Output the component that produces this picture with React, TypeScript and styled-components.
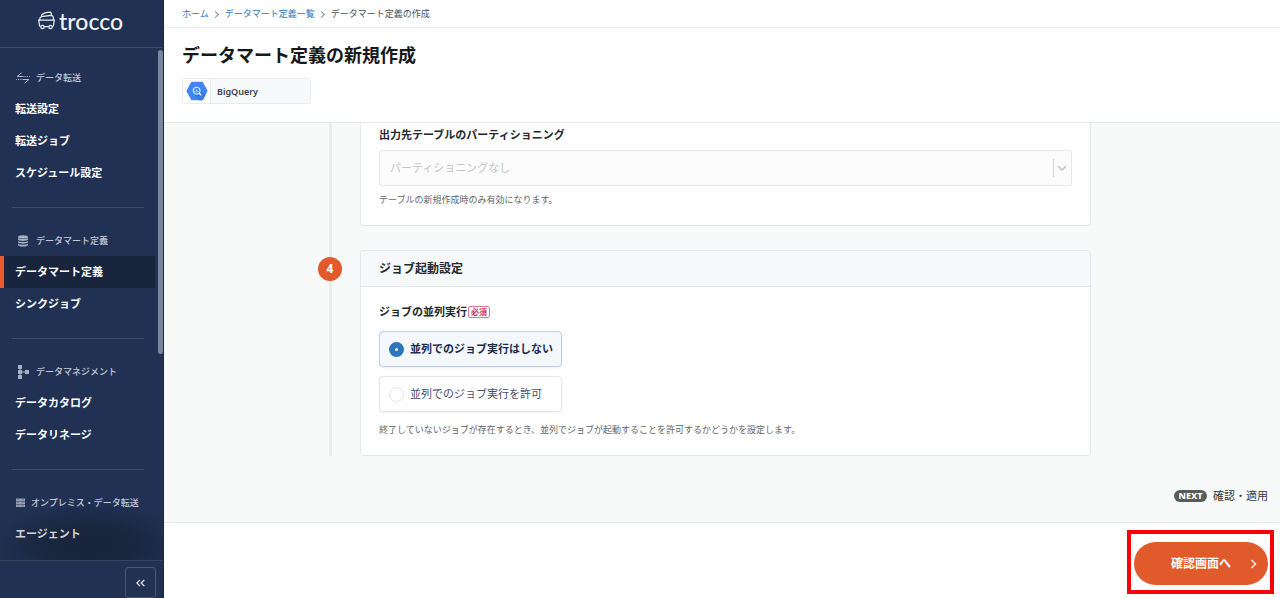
import React, { useState } from "react";
import styled, { createGlobalStyle } from "styled-components";

const GlobalStyle = createGlobalStyle`
  *, *::before, *::after { box-sizing: border-box; }
  body {
    margin: 0;
    font-family: "Noto Sans", "Noto Sans CJK JP", sans-serif;
    font-size: 11px;
    line-height: 16px;
    color: #24292e;
    background: #ffffff;
  }
  h1, h2, p, ul, ol, fieldset { margin: 0; padding: 0; border: 0; list-style: none; }
  a { text-decoration: none; }
  button, select, input { font: inherit; margin: 0; }
`;

const Shell = styled.div`
  display: flex;
  height: 100vh;
`;

/* ---------- sidebar ---------- */

const Sidebar = styled.aside`
  display: flex;
  flex-direction: column;
  flex: 0 0 164px;
  color: #ffffff;
  background: #203154;
  border-right: 1px solid #182644;
`;

const Logo = styled.a`
  display: flex;
  align-items: center;
  gap: 3px;
  flex: 0 0 48px;
  padding: 0 0 6px 37px;
  border-bottom: 1px solid #3a4a6a;
  color: #f2f4f7;
  font-family: Lato, sans-serif;
  font-size: 23px;
  font-weight: 500;
  line-height: 28px;
`;

const Nav = styled.nav`
  position: relative;
  flex: 1 1 0;
  min-height: 0;
  padding-top: 13px;
  overflow: hidden;

  &::after {
    content: "";
    position: absolute;
    inset: auto 0 0 0;
    height: 56px;
    background: radial-gradient(ellipse 100px 44px at 55% 75%, rgba(20, 28, 42, 0.6), rgba(20, 28, 42, 0.5) 45%, rgba(20, 28, 42, 0));
    pointer-events: none;
  }
`;

const ScrollThumb = styled.span`
  position: absolute;
  top: 2px;
  right: 0;
  width: 5px;
  height: 304px;
  border-radius: 3px;
  background: #7a869d;
`;

const NavSection = styled.section`
  & + &::before {
    content: "";
    display: block;
    height: 1px;
    margin: 18px 19px 16px 12px;
    background: #3c4b6a;
  }

  &:last-of-type a {
    position: relative;
    z-index: 1;
    color: #d3d4d7;
  }
`;

const NavHeading = styled.h2`
  display: flex;
  align-items: center;
  gap: 6px;
  height: 32px;
  padding: 1px 0 0 16px;
  color: #c3c9d4;
  font-size: 9px;
  font-weight: 500;
`;

const NavLink = styled.a<{ $active?: boolean }>`
  display: flex;
  align-items: center;
  height: 32px;
  margin-right: 8px;
  padding: 0 0 0 11px;
  border-left: 4px solid ${(p) => (p.$active ? "#e85d2c" : "transparent")};
  background: ${(p) => (p.$active ? "#18253d" : "transparent")};
  color: #ffffff;
  font-weight: 700;
`;

const SidebarFoot = styled.div`
  display: flex;
  justify-content: flex-end;
  flex: 0 0 38px;
  padding: 6px 7px 0 0;
  border-top: 1px solid #34435f;
`;

const CollapseButton = styled.button`
  display: grid;
  place-items: center;
  width: 31px;
  height: 31px;
  padding: 0;
  border: 1px solid #4a5875;
  border-radius: 3px;
  background: transparent;
  color: #e3e7ee;
`;

/* ---------- page header ---------- */

const Page = styled.div`
  display: flex;
  flex-direction: column;
  flex: 1 1 0;
  min-width: 0;
`;

const Breadcrumbs = styled.nav`
  flex: 0 0 28px;
  padding: 0 18px;
  border-bottom: 1px solid #e9ebec;
  font-size: 9px;

  ol {
    display: flex;
    align-items: center;
    height: 27px;
  }
  li {
    display: flex;
    align-items: center;
    color: #4c5258;
  }
  li + li::before {
    content: "";
    width: 5px;
    height: 5px;
    margin: 1px 7px 0 4px;
    border: solid #8a9094;
    border-width: 1px 1px 0 0;
    transform: rotate(45deg);
  }
  a { color: #3179bd; }
`;

const PageHeader = styled.header`
  flex: 0 0 auto;
  padding: 13px 18px 18px;
  border-bottom: 1px solid #e6e9ea;
`;

const Title = styled.h1`
  margin-bottom: 9px;
  color: #16191c;
  font-size: 18px;
  font-weight: 700;
  line-height: 28px;
`;

const SourceBadge = styled.div`
  display: inline-flex;
  width: 129px;
  height: 26px;
  border: 1px solid #e9ebed;
  border-radius: 3px;
  background: #f8f9fb;
  vertical-align: top;
`;

const SourceIcon = styled.span`
  display: grid;
  place-items: center;
  width: 28px;
  border-right: 1px solid #e9ebed;
  background: #ffffff;
`;

const SourceName = styled.span`
  padding-left: 6px;
  color: #3a3f44;
  font-size: 9px;
  font-weight: 600;
  line-height: 25px;
`;

/* ---------- form ---------- */

const Content = styled.main`
  display: flex;
  flex-direction: column;
  flex: 1 1 auto;
  min-height: 0;
  padding: 0 189px 0 154px;
  background: #f8faf9;
`;

const Step = styled.section`
  display: grid;
  grid-template-columns: 24px minmax(0, 1fr);
  column-gap: 18px;
`;

const Rail = styled.div`
  display: grid;
  justify-items: center;

  &::before {
    content: "";
    grid-area: 1 / 1;
    width: 3px;
    background: #eaecee;
  }
`;

const StepNumber = styled.span`
  grid-area: 1 / 1;
  width: 24px;
  height: 24px;
  margin-top: 7px;
  border-radius: 50%;
  background: #e05a2b;
  color: #ffffff;
  font-size: 12px;
  font-weight: 700;
  line-height: 24px;
  text-align: center;
`;

const Card = styled.div<{ $continued?: boolean }>`
  border: 1px solid #e5e8ea;
  border-top-width: ${(p) => (p.$continued ? "0" : "1px")};
  border-radius: ${(p) => (p.$continued ? "0 0 4px 4px" : "4px")};
  margin-bottom: ${(p) => (p.$continued ? "24px" : "0")};
  background: #ffffff;
`;

const CardTitle = styled.h2`
  height: 36px;
  padding: 0 18px;
  border-bottom: 1px solid #e5e8ea;
  border-radius: 4px 4px 0 0;
  background: #f7f8fa;
  font-size: 12px;
  font-weight: 600;
  line-height: 35px;
`;

const CardBody = styled.div<{ $top: number }>`
  padding: ${(p) => p.$top}px 18px 16px;
`;

const Label = styled.label`
  display: block;
  margin-bottom: 7px;
  font-weight: 600;
`;

const Hint = styled.p`
  margin-top: 5px;
  color: #62676b;
  font-size: 9px;
  line-height: 18px;
`;

const SelectBox = styled.div`
  position: relative;
`;

const Select = styled.select`
  display: block;
  appearance: none;
  width: 100%;
  height: 36px;
  padding: 0 32px 0 10px;
  border: 1px solid #e6e8e9;
  border-radius: 3px;
  background: #fbfbfb;
  color: #c2c5c7;
  opacity: 1;
`;

const SelectArrow = styled.span`
  position: absolute;
  top: 9px;
  right: 3px;
  display: grid;
  place-items: center;
  width: 16px;
  height: 18px;
  border-left: 1px solid #d5d7d8;
  pointer-events: none;
`;

const RadioGroup = styled.fieldset`
  display: flex;
  flex-direction: column;
  align-items: flex-start;
  gap: 9px;
  min-width: 0;
  margin-bottom: 9px;
`;

const Legend = styled.legend`
  display: flex;
  align-items: center;
  gap: 1px;
  margin-bottom: 11px;
  padding: 0;
  font-weight: 600;
`;

const Required = styled.span`
  padding: 0 2px;
  border: 1px solid #da7591;
  border-radius: 2px;
  color: #cb2f59;
  font-size: 8px;
  font-weight: 600;
  line-height: 10px;
`;

const RadioOption = styled.label<{ $checked: boolean }>`
  display: flex;
  align-items: center;
  gap: 6px;
  width: 183px;
  height: 36px;
  padding: 0 9px;
  border: 1px solid ${(p) => (p.$checked ? "#b9d0e8" : "#e6e8ea")};
  border-radius: 4px;
  background: ${(p) => (p.$checked ? "#f4f8fd" : "#ffffff")};
  box-shadow: 0 1px 2px rgba(30, 50, 80, 0.08);
  color: ${(p) => (p.$checked ? "#1b2b4d" : "#42506e")};
  font-weight: ${(p) => (p.$checked ? 600 : 400)};
  white-space: nowrap;
`;

const Radio = styled.input`
  appearance: none;
  flex: 0 0 15px;
  height: 15px;
  border: 1px solid #e1e4e6;
  border-radius: 50%;
  background: #ffffff;

  &:checked {
    border: 6px solid #2b76bd;
  }
`;

/* ---------- bottom area ---------- */

const NextStep = styled.p`
  display: flex;
  align-items: center;
  gap: 6px;
  align-self: flex-end;
  margin: auto -177px 18px 0;
  color: #33383c;
`;

const NextTag = styled.span`
  width: 33px;
  border-radius: 6px;
  background: #565b5e;
  color: #ffffff;
  font-size: 9px;
  font-weight: 800;
  line-height: 12px;
  text-align: center;
`;

const Footer = styled.footer`
  display: flex;
  justify-content: flex-end;
  flex: 0 0 76px;
  padding: 7px 6px 4px;
  border-top: 1px solid #e6e9ea;
  background: #ffffff;
`;

const Highlight = styled.div`
  padding: 8px 2px 5px 3px;
  border: 4px solid #fb0007;
`;

const SubmitButton = styled.button`
  display: grid;
  grid-template-columns: 1fr auto 1fr;
  align-items: center;
  width: 134px;
  height: 43px;
  padding: 0 11px;
  border: 0;
  border-radius: 22px;
  background: #e05a2b;
  color: #ffffff;
  font-size: 12px;
  font-weight: 700;

  span { grid-column: 2; }
  svg { justify-self: end; }
`;

/* ---------- icons ---------- */

const CartIcon = () => (
  <svg width="19" height="19" viewBox="0 0 19 19" fill="none" stroke="#eef1f5" strokeWidth="1.200" strokeLinejoin="round" aria-hidden="true">
    <path d="M1 9.200h17M1.800 9.200l.7 5.300c.1.700.5 1.100 1.200 1.100M7.400 15.600h4.200M15.300 15.600c.7 0 1.100-.4 1.200-1.100l.7-5.300" />
    <circle cx="5.500" cy="16" r="1.700" />
    <circle cx="13.500" cy="16" r="1.700" />
    <path d="M3 9C2.200 7 3.600 5.600 6 5.300l8-1c2 0 2.800 1.900 2.200 4.700" />
    <path d="M4.300 5.300C4.600 3 7.500 1.600 12.500 1.200c2 0 2.500 1.500 1.500 3.100" />
  </svg>
);

const TransferIcon = () => (
  <svg width="14" height="12" viewBox="0 0 14 12" fill="none" stroke="#aeb6c5" aria-hidden="true">
    <path d="M5.500.8 1 4.500h6.500M8.500 11.200 13 7.500H6.500" />
    <path d="M8.500 4.500h1.200M10.800 4.500h1.200M13 4.500h.8M.2 7.500h.8M2 7.500h1.200M4.300 7.500h1.200" />
  </svg>
);

const DatabaseIcon = () => (
  <svg width="14" height="12" viewBox="0 0 14 12" fill="#a9b2c1" aria-hidden="true">
    <ellipse cx="7" cy="1.900" rx="5" ry="1.700" />
    <path d="M2 3.100c1.400 1.300 8.600 1.300 10 0v1.700c-1.400 1.500-8.600 1.500-10 0zM2 5.900c1.400 1.300 8.600 1.300 10 0v1.700c-1.400 1.500-8.600 1.500-10 0zM2 8.700c1.400 1.300 8.600 1.300 10 0v1.600c-1.400 1.700-8.600 1.700-10 0z" />
  </svg>
);

const TreeIcon = () => (
  <svg width="14" height="14" viewBox="0 0 14 14" fill="#a9b2c1" aria-hidden="true">
    <path d="M2 0h4v4H2zM2 5h4v4H2zM2 10h4v4H2zM9 5h4v4H9zM3.500 3h1v8h-1zM5 6.500h5v1H5z" />
  </svg>
);

const ServerIcon = () => (
  <svg width="9" height="9" viewBox="0 0 9 9" aria-hidden="true">
    <path fill="#98a2b4" d="M0 .5h9V3H0zM0 3.500h9V6H0zM0 6.500h9V9H0z" />
    <path stroke="#66738c" strokeWidth=".8" d="M1 1.700h2M5.500 1.700H8M1 4.700h2M5.500 4.700H8M1 7.700h2M5.500 7.700H8" />
  </svg>
);

const BigQueryIcon = () => (
  <svg width="22" height="20" viewBox="0 0 22 20" aria-hidden="true">
    <path fill="#4385f5" d="M6.200.7h9.600c.5 0 .9.200 1.100.6l4.400 8c.2.500.2.900 0 1.400l-4.400 8c-.2.400-.6.600-1.100.6H6.200c-.5 0-.9-.2-1.100-.6l-4.400-8c-.2-.5-.2-.9 0-1.400l4.400-8c.2-.4.6-.6 1.100-.6z" />
    <path fill="#3b78e0" d="m14 8 5.500 6-2.600 4.700c-.2.400-.6.600-1.100.6h-2.600L9 14.500z" />
    <circle cx="10.700" cy="9.700" r="3.500" fill="#4385f5" stroke="#fff" strokeWidth="1" />
    <path stroke="#dce8fd" strokeWidth=".8" d="M9.200 9.700v1.300M10.700 8.500v3M12.200 10v1" />
    <path stroke="#fff" strokeWidth="1.300" d="m13.300 12.300 1.900 1.900" />
  </svg>
);

const DoubleChevronIcon = () => (
  <svg width="9" height="8" viewBox="0 0 9 8" fill="none" stroke="currentColor" strokeWidth="1.300" aria-hidden="true">
    <path d="M4 .9.900 4 4 7.100M8.300.9 5.200 4l3.100 3.100" />
  </svg>
);

const sections = [
  { title: "データ転送", icon: <TransferIcon />, items: ["転送設定", "転送ジョブ", "スケジュール設定"] },
  { title: "データマート定義", icon: <DatabaseIcon />, items: ["データマート定義", "シンクジョブ"] },
  { title: "データマネジメント", icon: <TreeIcon />, items: ["データカタログ", "データリネージ"] },
  { title: "オンプレミス・データ転送", icon: <ServerIcon />, items: ["エージェント"] },
];

const parallelOptions = ["並列でのジョブ実行はしない", "並列でのジョブ実行を許可"];

export default function App() {
  const [parallel, setParallel] = useState(0);

  return (
    <>
      <GlobalStyle />
      <Shell>
        <Sidebar>
          <Logo href="#">
            <CartIcon />
            trocco
          </Logo>
          <Nav>
            {sections.map((section) => (
              <NavSection key={section.title}>
                <NavHeading>
                  {section.icon}
                  {section.title}
                </NavHeading>
                <ul>
                  {section.items.map((item) => (
                    <li key={item}>
                      <NavLink href="#" $active={item === "データマート定義"}>
                        {item}
                      </NavLink>
                    </li>
                  ))}
                </ul>
              </NavSection>
            ))}
            <ScrollThumb />
          </Nav>
          <SidebarFoot>
            <CollapseButton type="button" aria-label="メニューを閉じる">
              <DoubleChevronIcon />
            </CollapseButton>
          </SidebarFoot>
        </Sidebar>

        <Page>
          <Breadcrumbs>
            <ol>
              <li><a href="#">ホーム</a></li>
              <li><a href="#">データマート定義一覧</a></li>
              <li>データマート定義の作成</li>
            </ol>
          </Breadcrumbs>
          <PageHeader>
            <Title>データマート定義の新規作成</Title>
            <SourceBadge>
              <SourceIcon><BigQueryIcon /></SourceIcon>
              <SourceName>BigQuery</SourceName>
            </SourceBadge>
          </PageHeader>

          <Content>
            <Step>
              <Rail />
              <Card $continued>
                <CardBody $top={4}>
                  <Label htmlFor="partitioning">出力先テーブルのパーティショニング</Label>
                  <SelectBox>
                    <Select id="partitioning" disabled>
                      <option>パーティショニングなし</option>
                    </Select>
                    <SelectArrow>
                      <svg width="10" height="6" viewBox="0 0 10 6" fill="none" stroke="#c0c3c5" strokeWidth="1.500" aria-hidden="true">
                        <path d="m1 1 4 4 4-4" />
                      </svg>
                    </SelectArrow>
                  </SelectBox>
                  <Hint>テーブルの新規作成時のみ有効になります。</Hint>
                </CardBody>
              </Card>
            </Step>

            <Step>
              <Rail>
                <StepNumber>4</StepNumber>
              </Rail>
              <Card>
                <CardTitle>ジョブ起動設定</CardTitle>
                <CardBody $top={17}>
                  <RadioGroup>
                    <Legend>
                      ジョブの並列実行
                      <Required>必須</Required>
                    </Legend>
                    {parallelOptions.map((option, index) => (
                      <RadioOption key={option} $checked={parallel === index}>
                        <Radio
                          type="radio"
                          name="parallel"
                          checked={parallel === index}
                          onChange={() => setParallel(index)}
                        />
                        {option}
                      </RadioOption>
                    ))}
                  </RadioGroup>
                  <Hint>終了していないジョブが存在するとき、並列でジョブが起動することを許可するかどうかを設定します。</Hint>
                </CardBody>
              </Card>
            </Step>

            <NextStep>
              <NextTag>NEXT</NextTag>
              確認・適用
            </NextStep>
          </Content>

          <Footer>
            <Highlight>
              <SubmitButton type="submit">
                <span>確認画面へ</span>
                <svg width="7" height="10" viewBox="0 0 7 10" fill="none" stroke="#ffffff" strokeWidth="1.300" aria-hidden="true">
                  <path d="m1.500 1 4 4-4 4" />
                </svg>
              </SubmitButton>
            </Highlight>
          </Footer>
        </Page>
      </Shell>
    </>
  );
}
